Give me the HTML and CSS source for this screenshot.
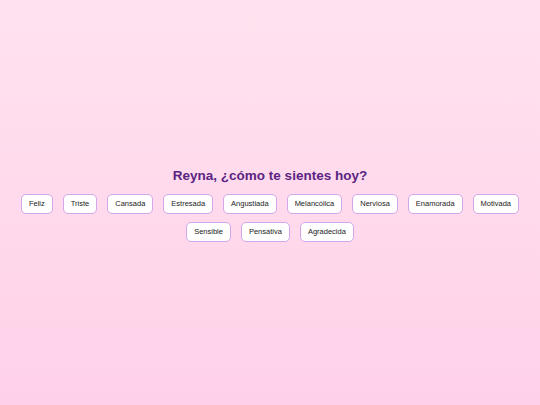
FILE: index.html
```html
<!DOCTYPE html>
<html lang="es">
<head>
<meta charset="utf-8">
<title>¿Cómo te sientes hoy?</title>
<link rel="stylesheet" href="styles.css">
</head>
<body>
<main class="page">
  <h1 class="title">Reyna, ¿cómo te sientes hoy?</h1>
  <div class="moods">
    <button class="mood">Feliz</button>
    <button class="mood">Triste</button>
    <button class="mood">Cansada</button>
    <button class="mood">Estresada</button>
    <button class="mood">Angustiada</button>
    <button class="mood">Melancólica</button>
    <button class="mood">Nerviosa</button>
    <button class="mood">Enamorada</button>
    <button class="mood">Motivada</button>
    <button class="mood">Sensible</button>
    <button class="mood">Pensativa</button>
    <button class="mood">Agradecida</button>
  </div>
</main>
</body>
</html>
```

FILE: styles.css
```css
html, body {
  margin: 0;
  padding: 0;
  height: 100%;
}
body {
  background: linear-gradient(180deg, #ffe2ef 0%, #ffd1e9 100%);
  font-family: "Liberation Sans", Arial, sans-serif;
}
.page {
  min-height: 100vh;
  box-sizing: border-box;
  padding: 5px 12px 0;
  display: flex;
  flex-direction: column;
  align-items: center;
  justify-content: center;
}
.title {
  margin: 0 0 10px;
  font-size: 13.5px;
  line-height: 16px;
  font-weight: bold;
  color: #5b2483;
}
.moods {
  display: flex;
  flex-wrap: wrap;
  justify-content: center;
  column-gap: 10px;
  row-gap: 8px;
}
.mood {
  height: 20px;
  box-sizing: border-box;
  padding: 0 7px;
  background: #ffffff;
  border: 1px solid #d4a6ea;
  border-radius: 5px;
  font-family: "Liberation Sans", Arial, sans-serif;
  font-size: 7.5px;
  color: #222222;
  line-height: 18px;
}
```
